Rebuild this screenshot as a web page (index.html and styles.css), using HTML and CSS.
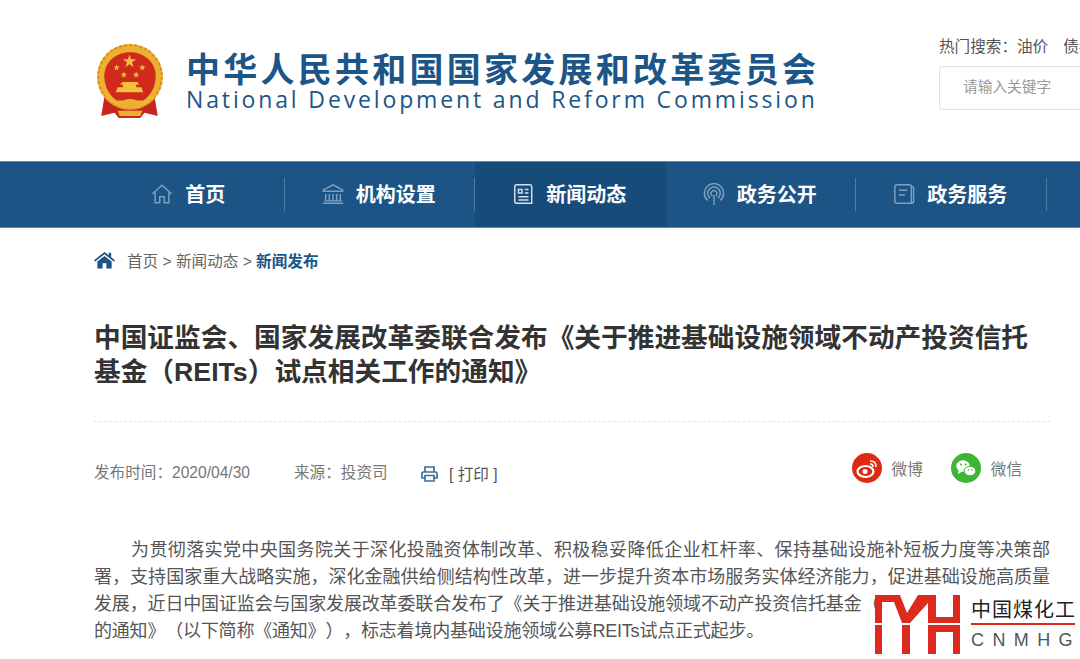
FILE: index.html
```html
<!DOCTYPE html>
<html lang="zh-CN">
<head>
<meta charset="utf-8">
<title>中国证监会、国家发展改革委联合发布</title>
<link rel="stylesheet" href="styles.css">
</head>
<body>
<div class="page">
  <header class="masthead">
    <svg class="emblem" viewBox="3 0 64 72">
      <defs>
        <path id="star" d="M0-1 L.225-.309 .951-.309 .363.118 .588.809 0 .382 -.588.809 -.363.118 -.951-.309 -.225-.309Z"/>
      </defs>
      <path d="M10 52 L7 70 L20 67 L24 72 H45 L49 67 L62 70 L59 52 Z" fill="#c8261c"/>
      <circle cx="35" cy="32" r="32" fill="#eeb030"/>
      <circle cx="35" cy="32" r="31" fill="none" stroke="#d98f1c" stroke-width="2" stroke-dasharray="3 2"/>
      <path d="M35 8 C49 8 60 18 60 31 C60 43 54 51 48 55 L22 55 C16 51 10 43 10 31 C10 18 21 8 35 8Z" fill="#cf2a1c"/>
      <g fill="#f4c23c">
        <use href="#star" transform="translate(34.500 17) scale(6.800)"/>
        <use href="#star" transform="translate(22 23) scale(3.400)"/>
        <use href="#star" transform="translate(47 23) scale(3.400)"/>
        <use href="#star" transform="translate(29 30) scale(3.400)"/>
        <use href="#star" transform="translate(41 30) scale(3.400)"/>
        <path d="M28 37 h14 l2 2.500 h-3 v2.500 h5 l2 5 H21 l2-5 h5 v-2.500 h-3z"/>
      </g>
      <path d="M12 50 C18 58 26 61 35 61 C44 61 52 58 58 50" fill="none" stroke="#f0b832" stroke-width="3"/>
      <path d="M25 58 C29 52 41 52 45 58 L45 62 L25 62Z" fill="#eeb030"/>
      <path d="M23 65 H47 L45 70 H25Z" fill="#eeb030"/>
    </svg>
    <div class="brand">
      <div class="brand-zh">中华人民共和国国家发展和改革委员会</div>
      <div class="brand-en">National Development and Reform Commission</div>
    </div>
    <div class="search">
      <div class="hot">热门搜索：油价<span class="hot-next">债券</span></div>
      <div class="search-box">请输入关键字</div>
    </div>
  </header>

  <nav class="nav">
    <a class="nav-item">
      <svg class="nav-icon" viewBox="0 0 24 24"><path d="M1.500 12 L12 2.500 L22.500 12 M4.500 10 V21.500 H9.500 V15 H14.500 V21.500 H19.500 V10"/></svg>
      <span>首页</span>
    </a>
    <a class="nav-item">
      <svg class="nav-icon" viewBox="0 0 24 24"><path d="M1.500 7.500 L12 2 L22.500 7.500 V9 H1.500 Z M4 12 V19 M8 12 V19 M12 12 V19 M16 12 V19 M20 12 V19 M2.500 19.500 H21.500 M1 22 H23"/></svg>
      <span>机构设置</span>
    </a>
    <a class="nav-item active">
      <svg class="nav-icon bright" viewBox="0 0 24 24"><path d="M5 2 H20 Q21.500 2 21.500 4 V22 H5 Q3 22 3 20 V4 Q3 2 5 2 Z M7 7 H11 V11 H7 Z M14 7 H18 M14 11 H18 M7 15 H18 M7 18.500 H18"/></svg>
      <span>新闻动态</span>
    </a>
    <a class="nav-item">
      <svg class="nav-icon" viewBox="0 0 24 24"><path d="M12 13 V24 M5 19 A10.500 10.500 0 1 1 19 19 M7.800 16.500 A6.800 6.800 0 1 1 16.200 16.500 M10.300 14.200 A3.200 3.200 0 1 1 13.700 14.200"/></svg>
      <span>政务公开</span>
    </a>
    <a class="nav-item">
      <svg class="nav-icon" viewBox="0 0 24 24"><path d="M4 2 H18 Q20 2 20 4 V22 H4 Q2 22 2 20 V4 Q2 2 4 2 Z M6.500 8 H15.500 M6.500 13 H13 M20 4 Q22.500 4 22.500 6 V20 Q22.500 22 20 22"/></svg>
      <span>政务服务</span>
    </a>
  </nav>

  <main class="content">
    <div class="crumbs">
      <svg class="crumb-icon" viewBox="0 0 22 18"><path d="M11 .5 L15.500 4 V1.500 H18 V6 L22 9.300 L20.800 10.700 L11 3 L1.200 10.700 L0 9.300 Z M3.500 10.500 L11 4.700 L18.500 10.500 V18 H13 V12.500 H9 V18 H3.500 Z"/></svg>
      <span>首页 &gt; 新闻动态 &gt; <b>新闻发布</b></span>
    </div>
    <h1 class="title">中国证监会、国家发展改革委联合发布《关于推进基础设施领域不动产投资信托基金（REITs）试点相关工作的通知》</h1>
    <div class="meta">
      <span class="meta-date">发布时间：2020/04/30</span>
      <span class="meta-source">来源：投资司</span>
      <svg class="print-icon" viewBox="0 0 17 16"><path d="M4 6 V1 H13 V6 M4 12 H1 V7.500 Q1 6 2.500 6 H14.500 Q16 6 16 7.500 V12 H13 M4 9.500 H13 V15 H4 Z"/></svg>
      <span class="meta-print">[ 打印 ]</span>
      <span class="share share-first">
        <svg class="share-icon" viewBox="0 0 30 30"><circle cx="15" cy="15" r="15" fill="#dd2a12"/><ellipse cx="13.500" cy="18.500" rx="8" ry="5.500" fill="none" stroke="#fff" stroke-width="2.200"/><circle cx="13" cy="18.500" r="2.500" fill="#fff"/><path d="M18 8 Q24 7.500 24 14 M18 11 Q21 10.800 21 14" fill="none" stroke="#fff" stroke-width="1.600"/></svg>
        <span>微博</span>
      </span>
      <span class="share share-last">
        <svg class="share-icon" viewBox="0 0 30 30"><circle cx="15" cy="15" r="15" fill="#3fb536"/><ellipse cx="12" cy="13" rx="6.800" ry="5.800" fill="#fff"/><path d="M8 16 L7 21 L12 18Z" fill="#fff"/><ellipse cx="19" cy="18" rx="5.800" ry="4.800" fill="#fff" stroke="#3fb536"/><circle cx="10" cy="11.500" r="1" fill="#3fb536"/><circle cx="14.500" cy="11.500" r="1" fill="#3fb536"/><circle cx="17.500" cy="17" r=".8" fill="#3fb536"/><circle cx="21" cy="17" r=".8" fill="#3fb536"/></svg>
        <span>微信</span>
      </span>
    </div>
    <p class="body-text">
      <span class="line line-first">为贯彻落实党中央国务院关于深化投融资体制改革、积极稳妥降低企业杠杆率、保持基础设施补短板力度等决策部</span>
      <span class="line">署，支持国家重大战略实施，深化金融供给侧结构性改革，进一步提升资本市场服务实体经济能力，促进基础设施高质量</span>
      <span class="line line-under">发展，近日中国证监会与国家发展改革委联合发布了《关于推进基础设施领域不动产投资信托基金（REITs）试点相关工作</span>
      <span class="line line-last">的通知》（以下简称《通知》），标志着境内基础设施领域公募REITs试点正式起步。</span>
    </p>
  </main>

  <aside class="stamp">
    <svg class="stamp-mark" viewBox="0 0 85 59">
      <g fill="#dd2a1f">
        <path d="M0 0 H25 L32 18 L43 0 H61 V22 H78 V0 H85 V28 H53 V8 L35 28 H27 L19 7 H7 V28 H0 Z"/>
        <rect x="0" y="30" width="7" height="29"/>
        <rect x="27" y="30" width="8" height="29"/>
        <path d="M53 30 H85 V59 H78 V37 H61 V59 H53 Z"/>
      </g>
    </svg>
    <div class="stamp-text">
      <div class="stamp-zh">中国煤化工</div>
      <div class="stamp-rule"></div>
      <div class="stamp-en">CNMHG</div>
    </div>
  </aside>
</div>
</body>
</html>
```
FILE: styles.css
```css
* { box-sizing: border-box; }
html, body { margin: 0; height: 100%; }
body { background: #fff; font-family: "Liberation Sans", "Noto Sans CJK SC", sans-serif; color: #666; overflow: hidden; }
.page { position: relative; width: 1080px; height: 659px; overflow: hidden; }

.masthead { height: 161px; display: flex; align-items: flex-start; padding: 33px 0 0 97px; }
.emblem { width: 66px; height: 74px; margin-top: 11px; flex: none; filter: blur(.5px); }
.brand { margin: 12px 0 0 23px; width: 670px; flex: none; color: #1c5587; }
.brand-zh { font-family: "Noto Sans CJK SC", sans-serif; font-size: 34px; line-height: 46px; font-weight: 700; letter-spacing: 3.250px; white-space: nowrap; }
.brand-en { font-family: "Open Sans", sans-serif; font-size: 23px; line-height: 30px; letter-spacing: 2.860px; white-space: nowrap; margin-top: -7px; }
.search { margin-left: 83px; flex: none; width: 200px; padding-top: 1px; }
.hot { font-size: 15.600px; line-height: 26px; color: #555; white-space: nowrap; }
.hot-next { margin-left: 15px; }
.search-box { margin-top: 6px; height: 44px; border: 1px solid #e0e0e0; border-radius: 4px; padding-left: 23px; font-size: 14.700px; line-height: 41px; color: #999; }

.nav { height: 67px; background: #1c5485; border-top: 1px solid #5f8aae; border-bottom: 1px solid #5f8aae; display: flex; padding-left: 94px; }
.nav-item { width: 190.500px; height: 100%; display: flex; align-items: center; justify-content: center; gap: 12px; position: relative; padding: 0 2px 2px 0; color: #fff; font-family: "Noto Sans CJK SC", sans-serif; font-size: 20px; font-weight: 700; }
.nav-item::after { content: ""; position: absolute; right: 0; top: 16px; height: 33px; width: 1px; background: #4f7da6; }
.nav-item.active { background: #164b7a; }
.nav-item.active::after { display: none; }
.nav-icon { width: 22px; height: 22px; fill: none; stroke: #7f9fbe; stroke-width: 1.600; flex: none; }
.nav-icon.bright { stroke: #d6e0ea; }

.content { padding: 0 30px 0 94px; }
.crumbs { display: flex; align-items: center; height: 26px; margin-top: 19px; gap: 12px; font-size: 15.600px; color: #666; }
.crumb-icon { width: 21px; height: 18px; fill: #1c5587; flex: none; }
.crumbs b { color: #1c5587; font-weight: 700; }
.title { margin: 48px 0 0; font-size: 26.700px; line-height: 34px; font-weight: 700; color: #333; padding-bottom: 32px; border-bottom: 1px dashed #e4e4e4; }
.meta { display: flex; align-items: center; height: 30px; margin-top: 34px; font-size: 15.600px; color: #777; white-space: nowrap; }
.meta-date { width: 200px; }
.meta-source { width: 127px; }
.print-icon { width: 17px; height: 16px; fill: none; stroke: #3f6f99; stroke-width: 1.700; margin: 6px 11px 0 0; }
.meta-print { color: #555; margin-top: 4px; }
.share { display: flex; align-items: center; gap: 10px; margin-bottom: 6px; }
.share-first { margin-left: auto; }
.share-last { margin-left: 28px; margin-right: 28px; }
.share-icon { width: 30px; height: 30px; flex: none; }
.body-text { margin: 51px 0 0; font-size: 18px; line-height: 27px; color: #555; }
.line { display: block; text-align: justify; text-align-last: justify; }
.line-first { padding-left: 37px; }
.line-under { white-space: nowrap; text-align-last: left; letter-spacing: -.15px; }
.line-last { text-align-last: left; text-spacing-trim: space-all; letter-spacing: -.2px; }

.stamp { position: absolute; left: 875px; top: 590px; width: 205px; height: 69px; background: #fff; display: flex; padding-top: 5px; }
.stamp-mark { width: 85px; height: 59px; flex: none; }
.stamp-text { margin-left: 11px; width: 104px; flex: none; }
.stamp-zh { font-family: "Noto Sans CJK SC", sans-serif; font-size: 20px; line-height: 27px; color: #222; letter-spacing: 1px; white-space: nowrap; }
.stamp-rule { height: 2px; background: #dd2a1f; margin-top: 1px; }
.stamp-en { font-size: 18px; line-height: 24px; margin-top: 3px; color: #555; letter-spacing: 8.400px; white-space: nowrap; }
```
